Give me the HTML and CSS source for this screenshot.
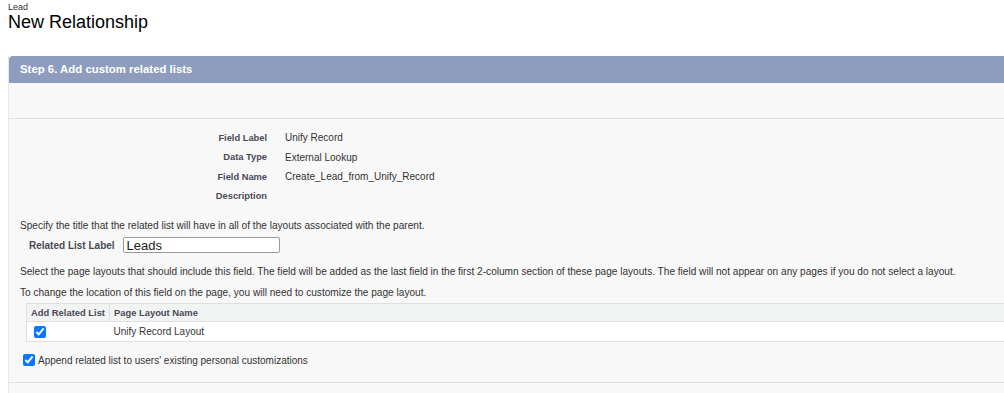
FILE: index.html
```html
<!DOCTYPE html>
<html lang="en">
<head>
    <meta charset="UTF-8">
    <title>New Relationship</title>
    <link rel="stylesheet" href="styles.css">
</head>
<body>
    <div class="page-title">
        <div class="object-type">Lead</div>
        <h1>New Relationship</h1>
    </div>

    <div class="wizard">
        <div class="step-head">Step 6. Add custom related lists</div>
        <div class="button-bar"></div>

        <div class="step-body">
            <table class="detail-list">
                <tr><th>Field Label</th><td>Unify Record</td></tr>
                <tr><th>Data Type</th><td>External Lookup</td></tr>
                <tr><th>Field Name</th><td>Create_Lead_from_Unify_Record</td></tr>
                <tr><th>Description</th><td></td></tr>
            </table>

            <p class="info first">Specify the title that the related list will have in all of the layouts associated with the parent.</p>
            <div class="label-row">
                <label for="rlLabel">Related List Label</label>
                <input id="rlLabel" type="text" value="Leads">
            </div>

            <p class="info">Select the page layouts that should include this field. The field will be added as the last field in the first 2-column section of these page layouts. The field will not appear on any pages if you do not select a layout.</p>
            <p class="info">To change the location of this field on the page, you will need to customize the page layout.</p>

            <table class="layout-list">
                <tr class="head-row">
                    <th class="col-check">Add Related List</th>
                    <th>Page Layout Name</th>
                </tr>
                <tr class="data-row">
                    <td class="col-check"><input type="checkbox" checked></td>
                    <td>Unify Record Layout</td>
                </tr>
            </table>

            <label class="append">
                <input type="checkbox" checked>
                Append related list to users' existing personal customizations
            </label>
        </div>
        <div class="button-bar bottom"></div>
    </div>
</body>
</html>
```

FILE: styles.css
```css
:root {
    --head-blue: #8e9dbe;
    --panel-bg: #f8f8f8;
    --line: #e0e0e0;
    --text: #333;
    --label: #4a4a56;
}

body {
    margin: 0;
    background: #fff;
    font-family: "Liberation Sans", Arial, sans-serif;
    color: var(--text);
    overflow: hidden;
}

.page-title {
    padding: 3px 8px 0;
}

.object-type {
    font-size: 9px;
    line-height: 9px;
    color: #333;
}

.page-title h1 {
    margin: 0;
    font-size: 18px;
    font-weight: normal;
    line-height: 20px;
    color: #000;
}

.wizard {
    margin: 24px -20px 0 8px;
    background: var(--panel-bg);
    border-left: 1px solid #e8e8e8;
}

.step-head {
    height: 27px;
    line-height: 27px;
    padding-left: 11px;
    background: var(--head-blue);
    border-radius: 4px 0 0 0;
    color: #fff;
    font-weight: bold;
    font-size: 11.4px;
}

.button-bar {
    height: 35px;
    border-bottom: 1px solid var(--line);
}

.button-bar.bottom {
    height: 10px;
    border-top: 1px solid var(--line);
    border-bottom: none;
}

.step-body {
    padding: 9px 0 16px 11px;
}

.detail-list {
    border-collapse: collapse;
}

.detail-list th {
    width: 247px;
    padding: 0 18px 0 0;
    text-align: right;
    font-size: 9.3px;
    color: var(--label);
    height: 19.5px;
}

.detail-list td {
    font-size: 10px;
    padding: 0;
}

.info {
    margin: 0;
    font-size: 10.1px;
    line-height: 21px;
}

.info.first {
    margin-top: 13px;
    line-height: 14px;
}

.label-row {
    display: flex;
    align-items: center;
    gap: 8px;
    padding-left: 9px;
    margin: 4px 0 8px;
}

.label-row label {
    font-size: 10px;
    font-weight: bold;
    color: var(--label);
}

.label-row input {
    width: 149px;
    height: 14px;
    padding: 0 3px;
    font-family: inherit;
    font-size: 13px;
    border: 1px solid #999;
    border-radius: 2px;
    background: #fff;
    color: #222;
}

.layout-list {
    margin: 0 0 0 6px;
    width: calc(100% - 6px);
    border-collapse: collapse;
    border: 1px solid var(--line);
}

.layout-list th,
.layout-list td {
    text-align: left;
    padding: 0 4px;
    font-size: 10px;
    white-space: nowrap;
}

.head-row th {
    height: 17px;
    background: #f2f3f3;
    font-weight: bold;
    font-size: 9.4px;
    color: var(--label);
    border-bottom: 1px solid var(--line);
}

.head-row th.col-check {
    width: 70px;
    border-right: 1px solid var(--line);
}

.data-row td {
    height: 19px;
    background: #fff;
}

.data-row .col-check {
    padding-left: 7px;
}

input[type="checkbox"] {
    width: 12px;
    height: 12px;
    margin: 0;
    vertical-align: middle;
    accent-color: #0a75ff;
}

.append {
    display: flex;
    align-items: center;
    gap: 3px;
    margin: 12px 0 0 3px;
    font-size: 10px;
}
```
